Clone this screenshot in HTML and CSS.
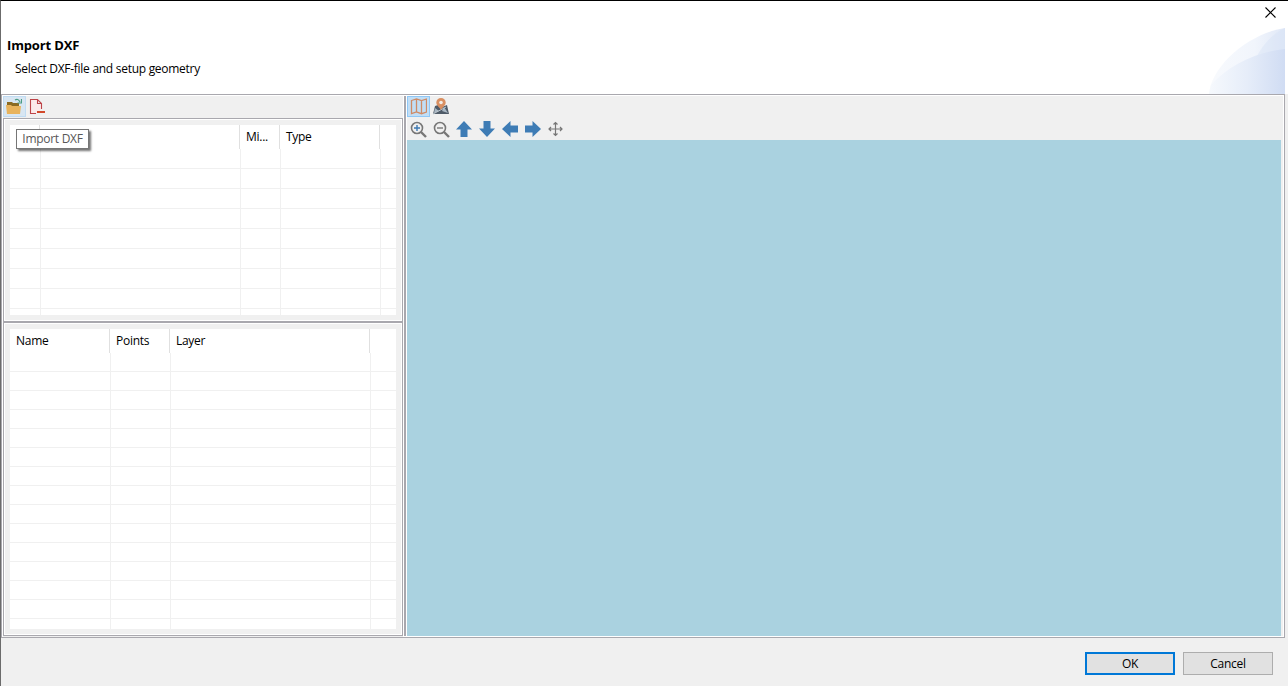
FILE: index.html
```
<!DOCTYPE html>
<html lang="en">
<head>
  <meta charset="UTF-8">
  <title>Import DXF</title>
  <link rel="stylesheet" href="styles.css">
</head>
<body>
  <div class="dialog">
    <header class="header">
      <div class="heading">
        <h1>Import DXF</h1>
        <p>Select DXF-file and setup geometry</p>
      </div>
      <div class="corner">
        <svg class="close" width="11" height="11" viewBox="0 0 11 11"><path d="M.5 .5l10 10M10.5 .5l-10 10" stroke="#000" stroke-width="1.1"/></svg>
        <svg class="banner" width="76" height="66" viewBox="0 0 76 66">
          <defs>
            <linearGradient id="outer"><stop offset="0" stop-color="#f8fafd"/><stop offset=".6" stop-color="#f1f5fc"/><stop offset="1" stop-color="#e0e8f7"/></linearGradient>
            <linearGradient id="inner"><stop offset="0" stop-color="#f6f9fd"/><stop offset=".5" stop-color="#e6edf9"/><stop offset="1" stop-color="#d0dcf3"/></linearGradient>
          </defs>
          <path d="M0 66C2 38 40 5 76 0V66z" fill="url(#outer)"/>
          <path d="M46 32C53 17 63 6 76 0V32z" fill="#d5e0f4" opacity=".4"/>
          <path d="M0 66L2 57C20 37 48 24 76 21V66z" fill="url(#inner)"/>
        </svg>
      </div>
    </header>

    <main class="content">
      <section class="left">
        <div class="toolbar">
          <button class="tool hover">
            <svg width="16" height="17" viewBox="0 0 16 17"><path d="M1 15V4h5l1 1h6v4H3z" fill="#8b6b23"/><path d="M0 7h5l1 1h9l-1 8H1z" fill="#e8b35c"/><path d="M9 2q3-2 5 2M15.500 1v4h-4" fill="none" stroke="#4b9b83" stroke-width="1.200"/></svg>
          </button>
          <button class="tool">
            <svg width="16" height="17" viewBox="0 0 16 17"><path d="M7 15.500H1.500V1.500H8.500L12.500 5.500V11M8.500 1.500V5.500H12.500" fill="#fbeaea" stroke="#bd4449" stroke-width="1.100"/><path d="M8 13h8v2H8z" fill="#d2492a"/></svg>
          </button>
        </div>
        <div class="group group-layers">
          <div class="table">
            <div class="thead">
              <span class="w30"></span><span class="w200"></span><span class="w40">Mi...</span><span class="w100">Type</span>
            </div>
            <div class="tbody rows20">
              <i class="w30"></i><i class="w200"></i><i class="w40"></i><i class="w100"></i><i class="rest"></i>
            </div>
          </div>
          <div class="tooltip">Import DXF</div>
        </div>
        <div class="group group-shapes">
          <div class="table">
            <div class="thead">
              <span class="w100">Name</span><span class="w60">Points</span><span class="w200">Layer</span>
            </div>
            <div class="tbody rows19">
              <i class="w100"></i><i class="w60"></i><i class="w200"></i><i class="rest"></i>
            </div>
          </div>
        </div>
      </section>

      <section class="right">
        <div class="toolbar">
          <button class="tool selected">
            <svg width="17" height="17" viewBox="0 0 17 17"><path d="M1.500 2.500L6.500 1l5 1.500 5-1.500V14l-5 1.700L6.500 14l-5 1.700zM6.500 1V14M11.500 2.500v13" fill="none" stroke="#cf8b66" stroke-width="1.300"/></svg>
          </button>
          <button class="tool">
            <svg width="16" height="17" viewBox="0 0 16 17"><path d="M2 8l3-1 4 2 5-2 2 9H0z" fill="#4f5b68"/><path d="M2 10l4 3-5 2zM11 9l4 6-6-2z" fill="#a9b7c3"/><path d="M0 16L13 9" stroke="#bcc7cf"/><path d="M8 12C6 8.500 3.300 7.500 3.300 4.500a4.700 4.500 0 0 1 9.400 0C12.700 7.500 10 8.500 8 12z" fill="#d98f61"/><circle cx="8" cy="4.500" r="1.800" fill="#f2ece6"/></svg>
          </button>
        </div>
        <div class="toolbar nav">
          <button class="tool"><svg width="17" height="17" viewBox="0 0 17 17"><g fill="none" stroke="#777"><circle cx="7" cy="7" r="5.500" stroke-width="1.600"/><path d="M11 11l5 5" stroke-width="2.400"/></g><path d="M7 4v6M4 7h6" stroke="#3d79b3" stroke-width="1.400"/></svg></button>
          <button class="tool"><svg width="17" height="17" viewBox="0 0 17 17"><g fill="none" stroke="#777"><circle cx="7" cy="7" r="5.500" stroke-width="1.600"/><path d="M11 11l5 5" stroke-width="2.400"/><path d="M4 7h6" stroke-width="1.400"/></g></svg></button>
          <button class="tool"><svg width="16" height="16" viewBox="0 0 16 16"><path d="M8 0l8 8.500h-4.500V16h-7V8.500H0z" fill="#3e7cb5"/></svg></button>
          <button class="tool"><svg width="16" height="16" viewBox="0 0 16 16"><path d="M8 16L0 7.500h4.500V0h7v7.500H16z" fill="#3e7cb5"/></svg></button>
          <button class="tool"><svg width="16" height="16" viewBox="0 0 16 16"><path d="M0 8L8.500 0v4.500H16v7H8.500V16z" fill="#3e7cb5"/></svg></button>
          <button class="tool"><svg width="16" height="16" viewBox="0 0 16 16"><path d="M16 8L7.500 0v4.500H0v7h7.500V16z" fill="#3e7cb5"/></svg></button>
          <button class="tool"><svg width="16" height="16" viewBox="0 0 16 16"><path d="M7.500 1.500v13M1 8h13M5.500 3.500l2-2 2 2M5.500 12.500l2 2 2-2M3 6l-2 2 2 2M12 6l2 2-2 2" fill="none" stroke="#777" stroke-width="1.200"/></svg></button>
        </div>
        <div class="map"></div>
      </section>
    </main>

    <footer class="footer">
      <button class="btn primary">OK</button>
      <button class="btn">Cancel</button>
    </footer>
  </div>
</body>
</html>
```
FILE: styles.css
```
* {
  box-sizing: border-box;
}
body {
  margin: 0;
  font-family: "Open Sans", "Noto Sans", sans-serif;
  font-size: 12px;
  letter-spacing: -0.28px;
  color: #000;
}
button {
  font: inherit;
  letter-spacing: inherit;
}
svg {
  display: block;
}
.dialog {
  display: flex;
  flex-direction: column;
  width: 1288px;
  height: 686px;
  border-top: 1px solid #000;
  border-left: 1px solid #6b6b6b;
  background: #f0f0f0;
  overflow: hidden;
}

/* header */
.header {
  display: flex;
  justify-content: space-between;
  height: 93px;
  background: #fff;
}
.heading {
  padding: 36px 0 0 6px;
}
.heading h1 {
  margin: 0;
  font-size: 13px;
  letter-spacing: -0.15px;
  line-height: 16px;
}
.heading p {
  margin: 8px 0 0 8px;
  line-height: 16px;
}
.corner {
  display: flex;
  flex-direction: column;
  align-items: flex-end;
  justify-content: space-between;
  padding: 6px 3px 0 0;
}
.close {
  margin-right: 9px;
}

/* content */
.content {
  display: flex;
  width: 1284px;
  height: 544px;
  border: 1px solid #a9a8ae;
}
.left {
  display: flex;
  flex-direction: column;
  width: 402px;
  border: 1px solid #fff;
  border-bottom: 0;
}
.toolbar {
  display: flex;
  height: 22px;
}
.tool {
  display: flex;
  align-items: center;
  width: 23px;
  height: 21px;
  padding: 0 0 0 2px;
  border: 1px solid transparent;
  background: none;
}
.tool.hover {
  background: #d8e6f2;
  border-color: #c0dcf3;
}
.tool.selected {
  background: #c2def5;
  border-color: #90c8f6;
}
.group {
  position: relative;
  width: 400px;
  border: 1px solid #a9a8ae;
  padding: 1px;
  background: #fff;
}
.group-layers {
  height: 204px;
}
.group-shapes {
  height: 314px;
}
.table {
  display: flex;
  flex-direction: column;
  height: 100%;
  border: 5px solid #f0f0f0;
}
.thead {
  display: flex;
  flex: none;
  height: 24px;
}
.thead span {
  padding-left: 6px;
  border-right: 1px solid #e0e0e0;
  line-height: 24px;
}
.tbody {
  display: flex;
  flex: 1;
}
.tbody i + i {
  border-left: 1px solid #f0f0f0;
}
.rows20 {
  background: repeating-linear-gradient(#fff 0 19px, #f0f0f0 19px 20px);
}
.rows19 {
  background: repeating-linear-gradient(#fff 0 18px, #f0f0f0 18px 19px);
}
.w30 { width: 30px; }
.w40 { width: 40px; }
.w60 { width: 60px; }
.w100 { width: 100px; }
.w200 { width: 200px; }
.rest { flex: 1; }

.tooltip {
  position: absolute;
  left: 12px;
  top: 10px;
  width: 73px;
  height: 20px;
  border: 1px solid #767676;
  background: #fff;
  box-shadow: 2px 2px 2px rgba(0, 0, 0, 0.55);
  color: #575757;
  line-height: 18px;
  text-align: center;
}

/* map side */
.right {
  display: flex;
  flex-direction: column;
  flex: 1;
  border: 1px solid #fff;
  border-left: 0;
  box-shadow: inset 2px 0 #a9a8ae, inset 3px 0 #fff;
  padding: 0 2px 0 3px;
}
.nav {
  height: 22px;
}
.nav .tool {
  height: 22px;
}
.map {
  flex: 1;
  background: #aad2e0;
}

/* buttons */
.footer {
  display: flex;
  justify-content: flex-end;
  gap: 8px;
  padding: 14px 15px 0 0;
}
.btn {
  width: 90px;
  height: 23px;
  padding: 0;
  border: 1px solid #adadad;
  background: #e1e1e1;
}
.btn.primary {
  border: 2px solid #0078d7;
}
```
